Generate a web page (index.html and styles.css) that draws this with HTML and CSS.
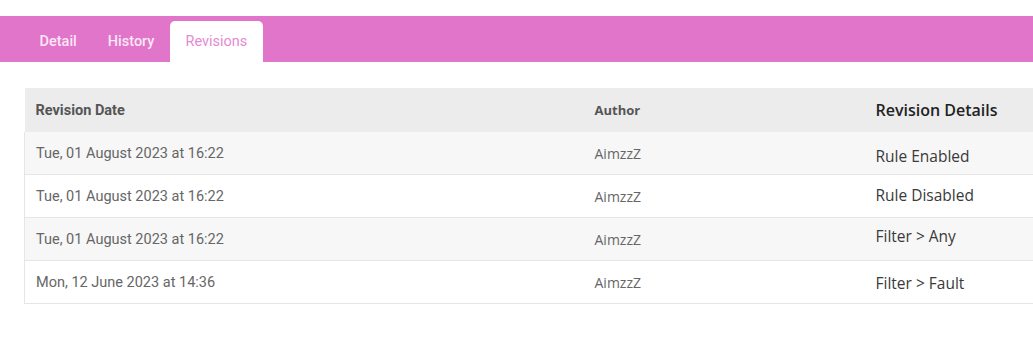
FILE: index.html
```html
<!DOCTYPE html>
<html lang="en">
  <head>
    <meta charset="UTF-8" />
    <meta name="viewport" content="width=device-width, initial-scale=1.0" />
    <title>Revisions</title>
    <link rel="stylesheet" href="styles.css">
  </head>
  <body>
    <nav class="tabbar">
      <a class="tab" href="#">Detail</a>
      <a class="tab" href="#">History</a>
      <a class="tab active" href="#">Revisions</a>
    </nav>

    <table class="revtable">
      <thead>
        <tr>
          <th class="col-date">Revision Date</th>
          <th class="col-author">Author</th>
          <th class="col-details">Revision Details</th>
        </tr>
      </thead>
      <tbody>
        <tr>
          <td class="col-date">Tue, 01 August 2023 at 16:22</td>
          <td class="col-author">AimzzZ</td>
          <td class="col-details"><p class="detail down2">Rule Enabled</p></td>
        </tr>
        <tr>
          <td class="col-date">Tue, 01 August 2023 at 16:22</td>
          <td class="col-author">AimzzZ</td>
          <td class="col-details"><p class="detail up1">Rule Disabled</p></td>
        </tr>
        <tr>
          <td class="col-date">Tue, 01 August 2023 at 16:22</td>
          <td class="col-author">AimzzZ</td>
          <td class="col-details"><p class="detail up4">Filter &gt; Any</p></td>
        </tr>
        <tr>
          <td class="col-date">Mon, 12 June 2023 at 14:36</td>
          <td class="col-author">AimzzZ</td>
          <td class="col-details"><p class="detail down1">Filter &gt; Fault</p></td>
        </tr>
      </tbody>
    </table>
  </body>
</html>
```

FILE: styles.css
```css
html, body {
  margin: 0;
  overflow: hidden;
}
body {
  padding-top: 16px;
  background: #ffffff;
  font-family: Roboto, "Liberation Sans", sans-serif;
}
.tabbar {
  display: flex;
  align-items: flex-end;
  height: 46px;
  padding-left: 24px;
  background: #e075c9;
}
.tab {
  display: flex;
  align-items: center;
  height: 41px;
  padding: 0 15.5px;
  font-size: 14.5px;
  font-weight: 500;
  color: #fbe6f6;
  text-decoration: none;
  box-sizing: border-box;
}
.tab.active {
  background: #ffffff;
  color: #e68ad3;
  border-radius: 5px 5px 0 0;
  font-weight: 400;
}
.revtable {
  margin: 26px 0 0 24px;
  width: 1040px;
  border-collapse: collapse;
  table-layout: fixed;
}
.revtable th {
  height: 44px;
  padding: 0 12px;
  text-align: left;
  background: #ececec;
  color: #555555;
}
.revtable td {
  height: 42px;
  padding: 0 12px;
  border-bottom: 1px solid #e6e6e6;
  color: #666666;
  font-size: 14.5px;
}
.revtable .col-date {
  padding-left: 11px;
}
.revtable tbody tr {
  border-left: 1px solid #e6e6e6;
}
.revtable tbody tr:nth-child(odd) td {
  background: #f7f7f7;
}
.col-date {
  width: 535px;
}
.col-author {
  width: 257px;
}
th.col-date {
  font-size: 14.5px;
  font-weight: 700;
}
th.col-author {
  font-family: "Open Sans", sans-serif;
  font-size: 13px;
  font-weight: 700;
}
th.col-details {
  font-family: "Open Sans", sans-serif;
  font-size: 16px;
  font-weight: 600;
  color: #222222;
}
td.col-author {
  font-family: "Open Sans", sans-serif;
  font-size: 14px;
}
.detail {
  margin: 0;
  font-family: "Open Sans", sans-serif;
  font-size: 15.5px;
  color: #3a3a3a;
}
.detail.down2 {
  padding-top: 5px;
}
.detail.down1 {
  padding-top: 2px;
}
.detail.up1 {
  padding-bottom: 2px;
}
.detail.up4 {
  padding-bottom: 7px;
}
```
